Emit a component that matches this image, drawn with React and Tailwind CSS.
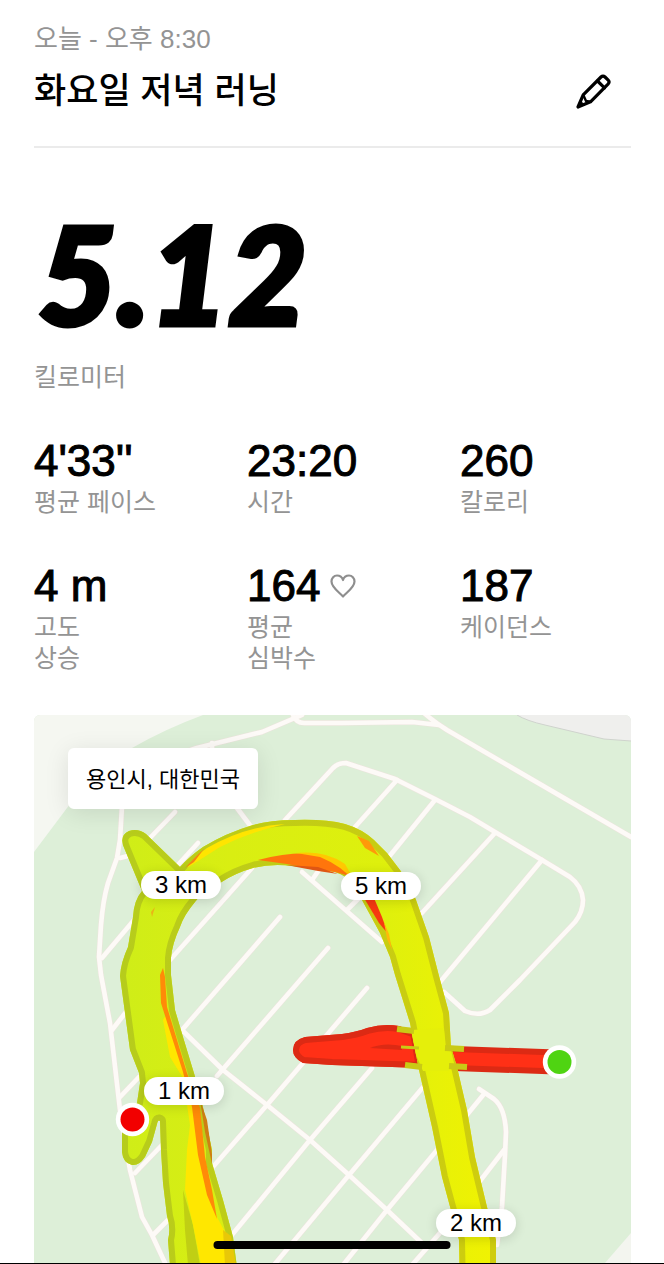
import React from 'react';

const stats = [
  { value: "4'33''", lines: ['평균 페이스'] },
  { value: '23:20', lines: ['시간'] },
  { value: '260', lines: ['칼로리'] },
  { value: '4 m', lines: ['고도', '상승'] },
  { value: '164', lines: ['평균', '심박수'], heart: true },
  { value: '187', lines: ['케이던스'] },
];

const roads = [
  'M302 715L262 732L197 748Q130 768 122 806L120 840L117 858L108 883Q103 900 101 925L99 957L101 975L110 1023L120 1110L130 1170L142 1217L152 1235L166 1265',
  'M120 858L132 855',
  'M212 743V748',
  'M293 715Q296 723 304 723L342 723L412 722L439 725',
  'M424 713Q434 722 447 730L631 837',
  'M285 820L333 768Q338 763 346 763L395 779L435 799L470 817L495 832L542 860L570 877Q582 886 583 900Q583 912 575 922L520 980L490 1010Q479 1017 465 1011L444 992',
  'M397 780L355 827',
  'M435 800L388 858',
  'M495 833L420 915',
  'M542 860L440 982',
  'M302 872L342 907L382 942',
  'M312 880L319 870',
  'M347 910L362 895',
  'M175 812L148 840',
  'M198 843L176 867',
  'M102 958L134 920',
  'M237 808L252 828',
  'M170 960L252 868',
  'M280 917L182 1030',
  'M328 948L217 1076',
  'M182 1030L223 1070L267 1105L310 1140L349 1175L387 1210L424 1245',
  'M367 988L267 1105L212 1168',
  'M372 1068L310 1140L231 1236',
  'M424 1086L349 1175L274 1265',
  'M437 1150L387 1210L343 1265',
  'M484 1094L466 1116',
  'M504 1150L480 1181',
  'M412 1265L446 1226',
  'M479 1089L494 1099Q505 1108 506 1132L505 1155L502 1207L497 1245',
  'M112 1030L126 1012',
  'M120 1097L139 1077',
  'M135 1173L162 1145',
  'M153 1235L169 1219',
];

const loop =
  'M172 1290L168 1240Q171 1228 167 1216L163 1183L161 1150L160 1121Q158 1119 157 1124L152 1142L145 1157Q139 1166 132 1165Q123 1163 122 1152L122 1130L137 1103L140 1083L139 1073L130 1050L125 1013L120 976Q121 962 128 947L133 917Q134 900 142 891L125 850Q118 836 129 831Q138 828 146 834L180 867Q190 856 203 847Q226 833 253 825Q270 820 295 820Q325 819 345 824Q362 829 374 840L387 853L400 870Q410 884 416 900L429 937L439 976L449 1013L451 1047L457 1067L467 1110L475 1157L487 1207L496 1240V1290H460L459 1240L442 1177L432 1127L419 1070L410 1023L395 975L390 957L380 933L362 900L349 880Q342 873 330 871L293 866Q272 863 253 868Q235 873 220 883Q203 890 195 902Q184 915 180 927Q172 944 171 958V975L175 1010L183 1037L200 1093L212 1150V1163L223 1200L233 1237L240 1290Z';

const redSpur =
  'M305 1037L342 1034Q356 1032 367 1028Q384 1023 399 1026L416 1032L422 1068L332 1065L303 1063Q293 1058 293 1050Q293 1040 305 1037Z';

function RunMap() {
  return (
    <svg
      className="absolute inset-0 h-full w-full"
      viewBox="34 715 597 548"
      preserveAspectRatio="xMinYMin slice"
      aria-hidden="true"
    >
      <defs>
        <linearGradient id="pace" gradientUnits="userSpaceOnUse" x1="120" y1="0" x2="490" y2="0">
          <stop offset="0" stopColor="#cfed18" />
          <stop offset="0.3" stopColor="#d9ee12" />
          <stop offset="0.7" stopColor="#def00d" />
          <stop offset="1" stopColor="#f0f202" />
        </linearGradient>
        <linearGradient id="paceEdge" gradientUnits="userSpaceOnUse" x1="120" y1="0" x2="490" y2="0">
          <stop offset="0" stopColor="#b6cc1c" />
          <stop offset="1" stopColor="#cfcd0e" />
        </linearGradient>
        <clipPath id="loopClip">
          <path d={loop} />
        </clipPath>
        <clipPath id="redClip">
          <path d={redSpur} />
        </clipPath>
      </defs>
      <rect x="34" y="715" width="597" height="1000" fill="#ddefd8" />
      <path d="M34 715H203Q165 729 132 748Q95 775 67 808L34 852Z" fill="#f5f7f1" />
      <path d="M517 715Q527 721 545 725L604 739L631 741V715Z" fill="#efefed" />
      <path d="M517 715Q527 721 545 725L604 739L631 741" fill="none" stroke="#cfd3cd" />
      <path d="M605 1263L631 1233V1263Z" fill="#f3f5ef" />

      <g fill="none" strokeLinecap="round" strokeLinejoin="round">
        <g stroke="#ebe4dc" strokeWidth="5.6">
          {roads.map((d) => <path key={d} d={d} />)}
        </g>
        <g stroke="#fdfaf7" strokeWidth="4.6">
          {roads.map((d) => <path key={d} d={d} />)}
        </g>
      </g>

      <path d="M440 1058L556 1062" stroke="#dc2a14" strokeWidth="25" />
      <path d="M440 1058L556 1062" stroke="#ff3016" strokeWidth="13" />
      <path d={redSpur} fill="#ff3016" />
      <path d={redSpur} fill="none" stroke="#dc2a14" strokeWidth="12" clipPath="url(#redClip)" />
      <path d="M370 1048Q384 1042 402 1046L402 1050Z" fill="#dc2a14" />

      <path d={loop} fill="url(#pace)" />
      <g clipPath="url(#loopClip)">
        <path d={loop} fill="none" stroke="url(#paceEdge)" strokeWidth="12" strokeLinejoin="round" />
        <path d="M183 1190L193 1225L200 1265H188L185 1230Z" fill="#c0cf14" />
      </g>
      <path d="M163 1020L167 1013L187 1077L193 1103L202 1170L217 1217L226 1234L230 1265H201L193 1225L185 1190L187 1150L190 1125L183 1078L170 1057Z" fill="#ffe700" />
      <path d="M223 1230L231 1236L236 1265H225Z" fill="#e8c808" />
      <path d="M163 968L165 977L167 1007L174 1030L187 1073L200 1108L205 1157L212 1190L217 1219L207 1195L198 1155L192 1107L183 1072L167 1022L161 1003L160 975Z" fill="#ff8a08" />
      <path d="M200 1100L207 1120L212 1155V1164L205 1132Z" fill="#cf7e13" />
      <path d="M187 868Q195 856 207 848Q245 826 285 824Q250 832 220 847L198 861Z" fill="#ffe500" />
      <path d="M185 868Q196 856 204 849L194 862Z" fill="#f48512" />
      <path d="M258 860Q297 850 320 855Q342 861 352 877Q336 871 320 870L287 864Z" fill="#ff750c" />
      <path d="M296 853Q326 850 345 864L355 882Q342 866 320 857Z" fill="#ffc900" />
      <path d="M286 865L318 867L338 874L318 871Z" fill="#df5613" />
      <path d="M357 836L369 841L379 856L365 848Z" fill="#ff9909" />
      <path d="M364 898L374 898L382 917L388 934L379 923Z" fill="#f63a10" />
      <path d="M384 922L389 934L392 950L387 939Z" fill="#ffb80a" />
      <path d="M151 912L155 907L152 917Z" fill="#e9b516" />

      <path d="M411 1030L444 1028L446 1048L451 1050L455 1067L448 1071L423 1071L416 1055Z" fill="#e5ef0a" />
      <g fill="none" stroke="#c9ca16">
        <path d="M397 1029L414 1031" strokeWidth="6" />
        <path d="M401 1047L419 1048" strokeWidth="3" />
        <path d="M405 1065L422 1067" strokeWidth="6" />
        <path d="M445 1048L464 1049" strokeWidth="6" />
        <path d="M449 1066L467 1067" strokeWidth="6" />
      </g>

      <circle cx="132.500" cy="1119.500" r="16.700" fill="#fff" />
      <circle cx="132.500" cy="1119.500" r="12" fill="#f20000" />
      <circle cx="559.500" cy="1062" r="16.700" fill="#fff" />
      <circle cx="559.500" cy="1062" r="12" fill="#4fd412" />
    </svg>
  );
}

function KmPill({ className, children }) {
  return (
    <span
      className={`absolute flex h-7 w-20 items-center justify-center rounded-full bg-white text-2xl leading-7 shadow-[0_2px_12px_rgba(0,0,0,0.14)] ${className}`}
    >
      {children}
    </span>
  );
}

export default function App() {
  return (
    <div className="flex min-h-screen flex-col border-b border-black bg-white pt-[23px] pr-[33px] pl-[34px] font-['Liberation_Sans','Noto_Sans_CJK_KR',sans-serif] text-black">
      <header className="border-b-2 border-[#ebebeb] pb-[31px]">
        <p className="text-[26px] leading-8 text-[#949494]">오늘 - 오후 8:30</p>
        <div className="mt-3 flex h-12 items-center justify-between pr-5">
          <h1 className="text-[35px] leading-[48px] font-medium">화요일 저녁 러닝</h1>
          <button type="button" aria-label="이름 편집">
            <svg className="h-9 w-9" viewBox="0 0 36 36" fill="none" stroke="#000" strokeWidth="3.200" strokeLinejoin="round" strokeLinecap="round">
              <path d="M3 34L8.200 21.800L26 4Q28 2 30 4L33.200 7.200Q35 9 33 11.200L15.500 28.800Z" />
              <path d="M22.500 8L29.500 14.800" />
              <path d="M8.200 21.800L11 28L15.500 28.800" strokeWidth="2.400" />
              <path d="M3 34L5.500 28L9 31.500Z" fill="#000" strokeWidth="1" />
            </svg>
          </button>
        </div>
      </header>

      <main className="flex flex-1 flex-col">
        <p className="mt-[73px] pl-1 font-[Lato] text-[136px] leading-[104px] font-black italic [-webkit-text-stroke:5px_#000]">5.12</p>
        <p className="mt-[37px] text-[25px] leading-[31px] text-[#949494]">킬로미터</p>

        <dl className="mt-[46px] grid grid-cols-3 gap-x-[42px] gap-y-[46px]">
          {stats.map((s) => (
            <div key={s.value} className="flex flex-col-reverse justify-end gap-1">
              <dt className="text-[25px] leading-[31px] text-[#949494]">
                {s.lines.map((l) => <span key={l} className="block">{l}</span>)}
              </dt>
              <dd className="flex items-center gap-2.5 text-[44px] leading-[44px] [-webkit-text-stroke:1px_#000]">
                {s.value}
                {s.heart && (
                  <svg className="h-6 w-[26px]" viewBox="0 0 26 24" fill="none" stroke="#8e8e8e" strokeWidth="2.200" strokeLinejoin="round" aria-hidden="true">
                    <path d="M13 22.500C9.500 18.500 1.500 13.500 1.500 7.500C1.500 4 4 1.500 7 1.500C10 1.500 12.200 3.500 13 6C13.800 3.500 16 1.500 19 1.500C22 1.500 24.500 4 24.500 7.500C24.500 13.500 16.500 18.500 13 22.500Z" />
                  </svg>
                )}
              </dd>
            </div>
          ))}
        </dl>

        <section aria-label="러닝 경로" className="relative mt-[41px] min-h-[540px] flex-1 overflow-hidden rounded-t-md">
          <RunMap />
          <p className="absolute top-[33px] left-[34px] rounded-md bg-white px-[18px] pt-4 pb-[13px] text-[22px] leading-8 whitespace-nowrap shadow-[0_4px_24px_rgba(0,0,0,0.10)]">
            용인시, 대한민국
          </p>
          <KmPill className="top-[156px] left-[107px]">3 km</KmPill>
          <KmPill className="top-[157px] left-[307px]">5 km</KmPill>
          <KmPill className="top-[362px] left-[110px]">1 km</KmPill>
          <KmPill className="top-[494px] left-[402px]">2 km</KmPill>
        </section>
      </main>

      <div className="fixed bottom-[15px] left-1/2 h-2 w-[237px] -translate-x-1/2 rounded-full bg-black" />
    </div>
  );
}
